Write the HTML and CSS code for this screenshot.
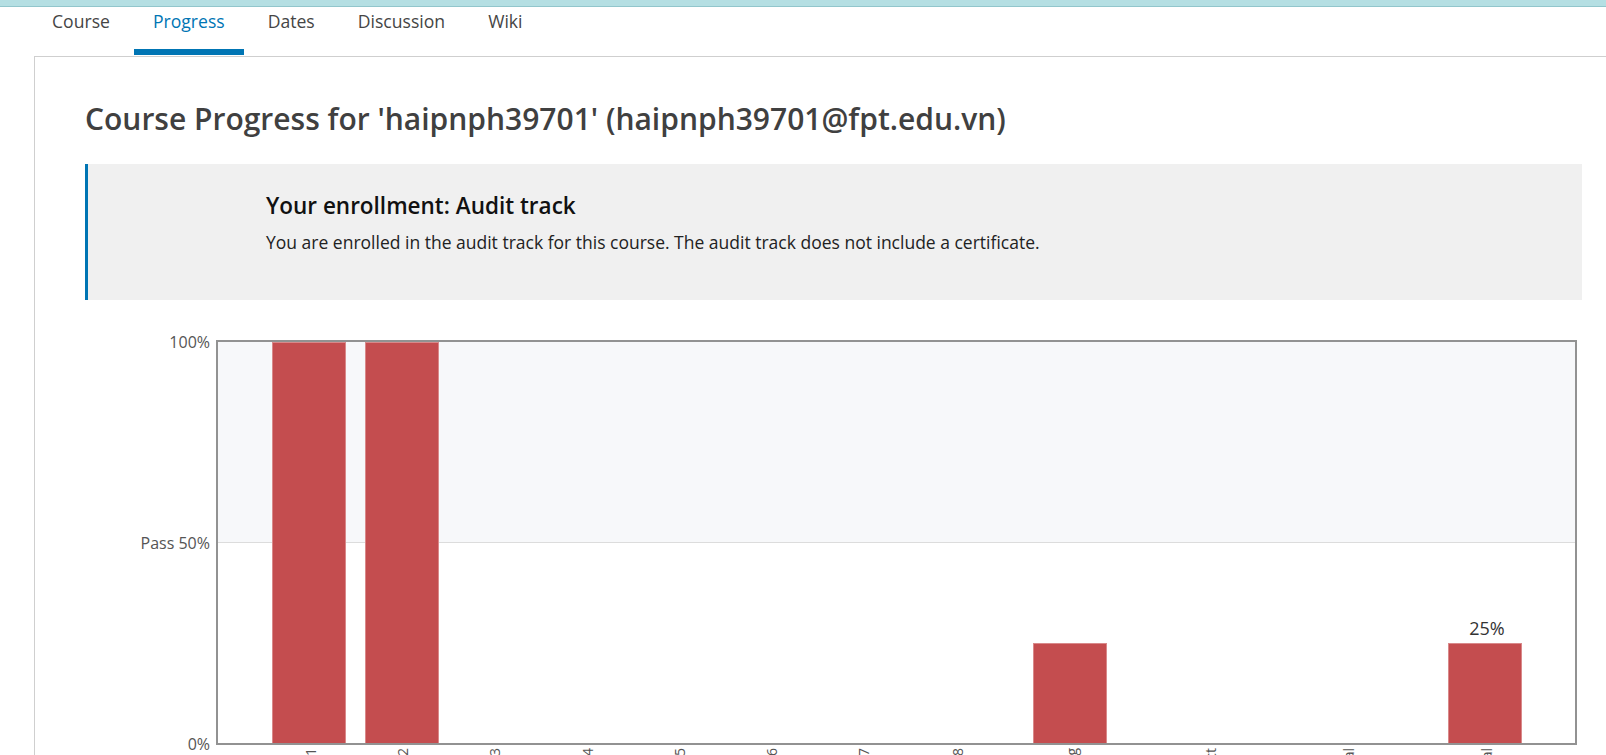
FILE: index.html
```html
<!DOCTYPE html>
<html lang="en">
<head>
<meta charset="utf-8">
<title>Course Progress</title>
<link rel="stylesheet" href="styles.css">
</head>
<body>
<div class="topbar"></div>
<nav class="tabs">
  <a class="tab">Course</a>
  <a class="tab active">Progress</a>
  <a class="tab">Dates</a>
  <a class="tab">Discussion</a>
  <a class="tab">Wiki</a>
</nav>
<main class="card">
  <h1 class="title">Course Progress for 'haipnph39701' (haipnph39701@fpt.edu.vn)</h1>
  <section class="enroll">
    <h2 class="enroll-head">Your enrollment: Audit track</h2>
    <p class="enroll-text">You are enrolled in the audit track for this course. The audit track does not include a certificate.</p>
  </section>
  <div class="chart">
    <div class="yaxis">
      <span class="ylabel" style="top:2px">100%</span>
      <span class="ylabel" style="top:203px">Pass 50%</span>
      <span class="ylabel" style="top:404px">0%</span>
    </div>
    <div class="plot">
      <div class="upper"></div>
      <div class="bar" style="left:54px;height:100%"></div>
      <div class="bar" style="left:147px;height:100%"></div>
      <div class="bar" style="left:815px;height:25%"></div>
      <div class="bar" style="left:1230px;height:25%"><span class="barval">25%</span></div>
      <span class="xlabel" style="left:93px">Lab 01</span>
      <span class="xlabel" style="left:185px">Lab 02</span>
      <span class="xlabel" style="left:277px">Lab 03</span>
      <span class="xlabel" style="left:370px">Lab 04</span>
      <span class="xlabel" style="left:462px">Lab 05</span>
      <span class="xlabel" style="left:554px">Lab 06</span>
      <span class="xlabel" style="left:646px">Lab 07</span>
      <span class="xlabel" style="left:740px">Lab 08</span>
      <span class="xlabel" style="left:854px">Lab Avg</span>
      <span class="xlabel" style="left:993px">Project</span>
      <span class="xlabel" style="left:1131px">Final</span>
      <span class="xlabel" style="left:1269px">Total</span>
    </div>
  </div>
</main>
</body>
</html>
```
FILE: styles.css
```css
html, body {
  margin: 0;
  padding: 0;
  background: #fff;
  overflow: hidden;
  font-family: "Open Sans", "Liberation Sans", sans-serif;
}
.topbar {
  height: 6px;
  background: #b5dfe3;
  border-bottom: 1px solid #92c6cc;
}
.tabs {
  display: flex;
  gap: 5px;
  height: 49px;
  padding-left: 33px;
  align-items: flex-start;
}
.tab {
  box-sizing: border-box;
  height: 48px;
  padding: 2px 19px 0;
  font-size: 17.6px;
  line-height: 24px;
  color: #454545;
  text-decoration: none;
}
.tab.active {
  color: #0075b4;
  border-bottom: 6px solid #0075b4;
}
.card {
  display: block;
  margin-left: 34px;
  width: 1640px;
  border: 1px solid #cfcfcf;
  border-bottom: none;
  padding: 43px 50px 40px 50px;
  box-sizing: content-box;
  min-height: 700px;
}
.title {
  margin: 0;
  font-size: 30px;
  font-weight: 600;
  line-height: 38px;
  color: #404040;
}
.enroll {
  margin-top: 26px;
  width: 1497px;
  box-sizing: border-box;
  background: #f0f0f0;
  border-left: 3px solid #0075b4;
  padding: 27px 0 45px 178px;
}
.enroll-head {
  margin: 0;
  font-size: 22.5px;
  font-weight: 600;
  line-height: 30px;
  color: #111;
}
.enroll-text {
  margin: 8px 0 0;
  font-size: 17.5px;
  line-height: 26px;
  color: #222;
}
.chart {
  display: flex;
  margin-top: 40px;
}
.yaxis {
  position: relative;
  width: 131px;
  flex: none;
}
.ylabel {
  position: absolute;
  right: 6px;
  transform: translateY(-50%);
  font-size: 16px;
  line-height: 20px;
  color: #555;
  white-space: nowrap;
}
.plot {
  position: relative;
  width: 1361px;
  height: 405px;
  box-sizing: border-box;
  border: 2px solid #929292;
  background: #fff;
}
.upper {
  height: 200px;
  background: #f7f8fa;
  border-bottom: 1px solid #dcdcdc;
}
.bar {
  position: absolute;
  bottom: 0;
  width: 74px;
  box-sizing: border-box;
  background: #c44d4f;
  border: 1px solid #d9898a;
  border-bottom: none;
}
.barval {
  position: absolute;
  left: 2px;
  right: -2px;
  top: -27px;
  text-align: center;
  font-size: 18px;
  line-height: 22px;
  color: #333;
}
.xlabel {
  position: absolute;
  top: 406px;
  writing-mode: vertical-rl;
  transform: translateX(-50%) rotate(180deg);
  font-size: 14px;
  line-height: 16px;
  color: #555;
  white-space: nowrap;
}
```
